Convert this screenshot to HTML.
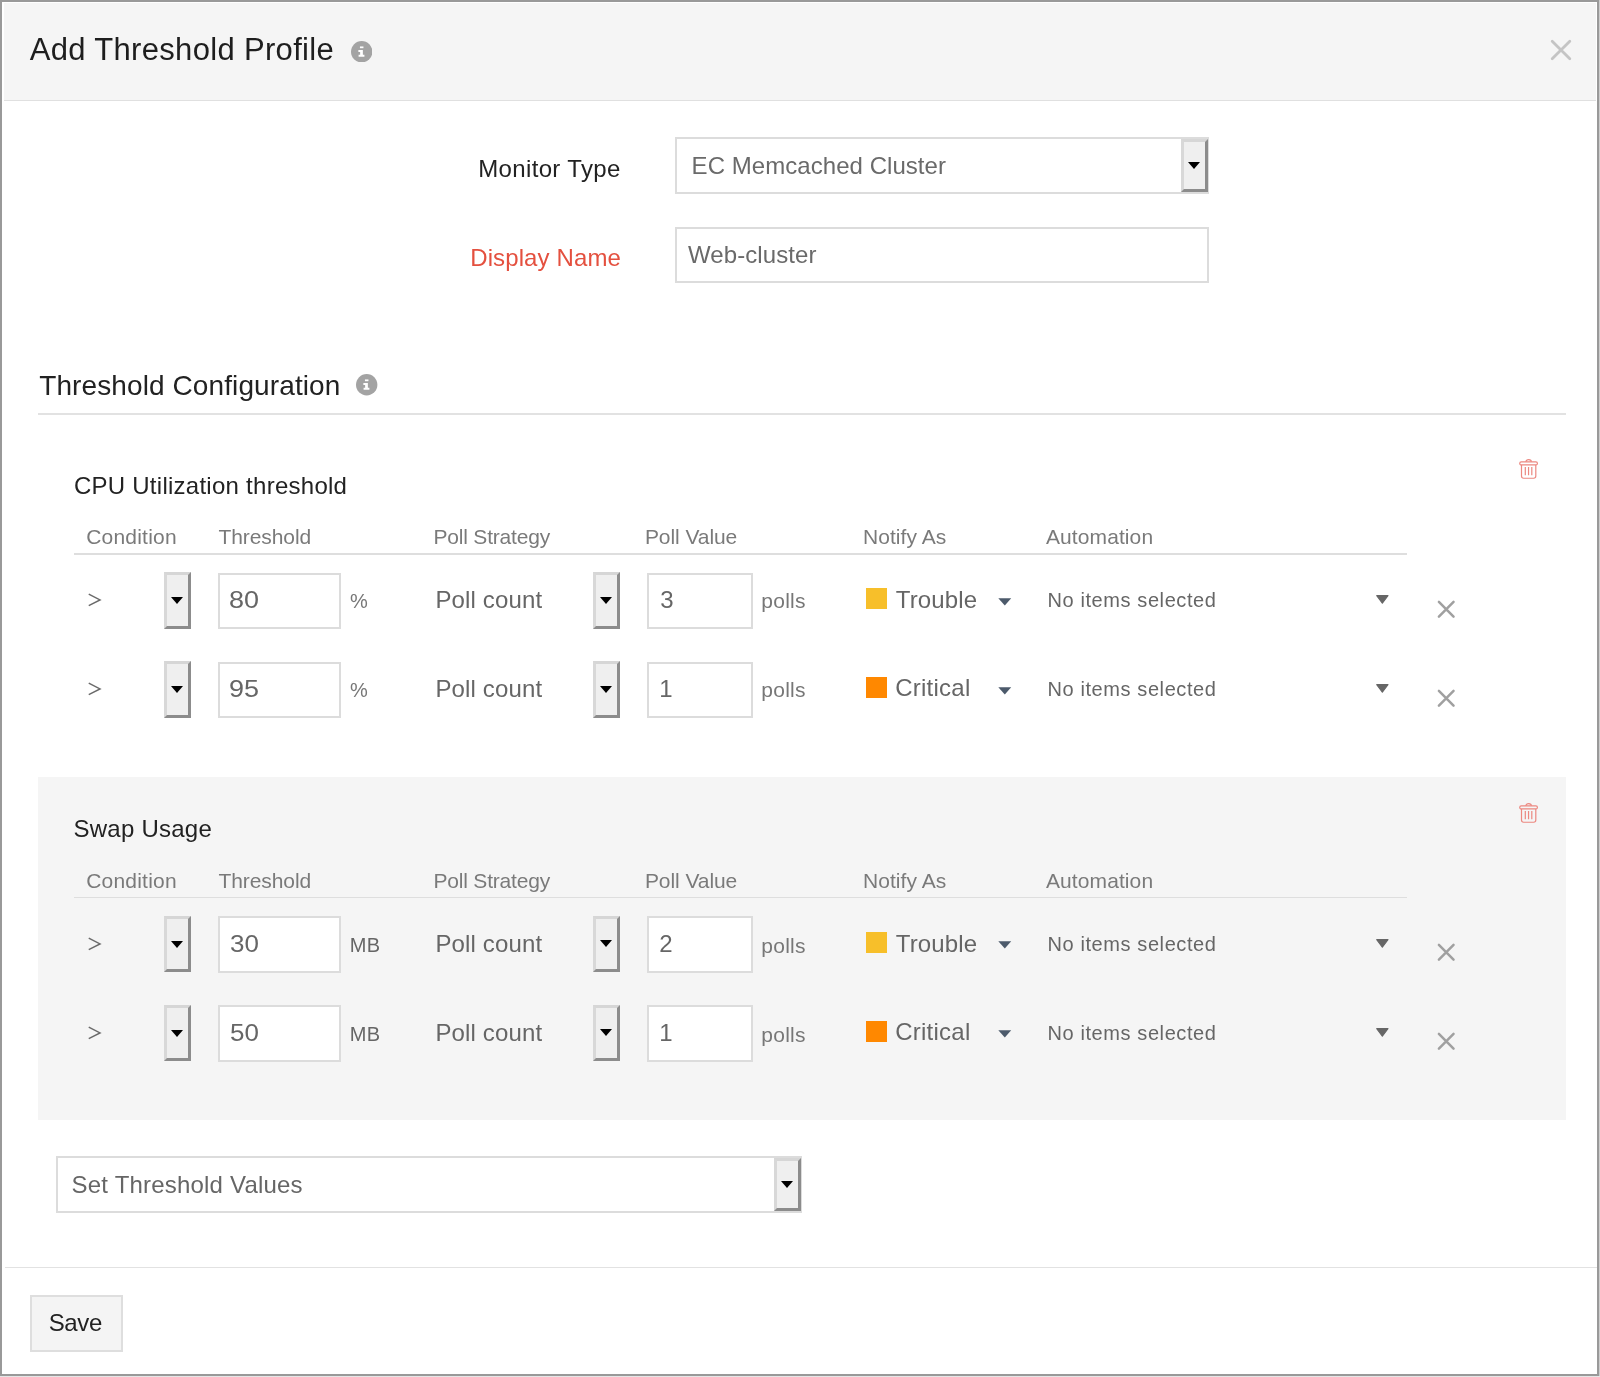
<!DOCTYPE html>
<html><head><meta charset="utf-8"><style>
html,body{margin:0;padding:0;width:1600px;height:1377px;overflow:hidden;background:#cdcdcd;font-family:"Liberation Sans", sans-serif;}
.abs{position:absolute;}
.t{position:absolute;white-space:nowrap;line-height:1;font-family:"Liberation Sans", sans-serif;}
#dlg{position:absolute;left:0;top:0;width:1599px;height:1376px;box-sizing:border-box;border:2px solid #999;background:#fff;}
#hdr{position:absolute;left:4px;top:3px;width:1592px;height:97px;background:#f5f5f5;border-bottom:1.5px solid #e0e0e0;}
.box{position:absolute;box-sizing:border-box;border:2px solid #dcdcdc;background:#fff;}
.btn3d{position:absolute;box-sizing:border-box;border-style:solid;border-width:3px 3.8px 3px 3px;border-color:#d6d6d6 #8c8c8c #8c8c8c #d8d8d8;background:#efefef;}
.btn3d .tri{position:absolute;left:50%;top:50%;margin-left:-6.5px;margin-top:-3.5px;width:0;height:0;border-left:6.5px solid transparent;border-right:6.5px solid transparent;border-top:7px solid #000;}
</style></head><body>
<div id="dlg"></div>
<div id="hdr"></div>
<svg class="abs" style="left:351.0px;top:40.8px" width="21.4" height="21.4" viewBox="0 0 22 22"><circle cx="11" cy="11" r="11" fill="#a3a3a3"/><rect x="9.2" y="5.6" width="3.6" height="1.8" fill="#fff"/><path d="M7.6 9.3h4.6v4.9h1.6v2.1H7.8v-2.1h1.6v-2.8H7.6z" fill="#fff"/></svg>
<svg class="abs" style="left:356.3px;top:374.3px" width="21.4" height="21.4" viewBox="0 0 22 22"><circle cx="11" cy="11" r="11" fill="#a3a3a3"/><rect x="9.2" y="5.6" width="3.6" height="1.8" fill="#fff"/><path d="M7.6 9.3h4.6v4.9h1.6v2.1H7.8v-2.1h1.6v-2.8H7.6z" fill="#fff"/></svg>
<svg class="abs" style="left:1549px;top:38px" width="24" height="24" viewBox="0 0 24 24"><path d="M3.2 3.2L20.8 20.8M20.8 3.2L3.2 20.8" stroke="#c4c4c4" stroke-width="2.8" stroke-linecap="round"/></svg>
<div class="box" style="left:675px;top:137px;width:534px;height:56.5px;"></div>
<div class="btn3d" style="left:1181px;top:139px;width:26.6px;height:52.5px"><i class="tri"></i></div>
<div class="box" style="left:675px;top:226.5px;width:534px;height:56.5px"></div>
<div class="abs" style="left:38px;top:413px;width:1528px;height:2px;background:#e2e2e2"></div>
<div class="abs" style="left:38px;top:777px;width:1528px;height:343px;background:#f5f5f5"></div>
<svg class="abs" style="left:1518px;top:458px" width="22" height="22" viewBox="0 0 22 22" fill="none" stroke="#ec8880" stroke-width="1.2"><path d="M7.85 3.8c0-1.3 1.2-2.2 2.75-2.2s2.75.9 2.75 2.2"/><rect x="1.75" y="3.8" width="17.65" height="3.1" rx="1.5"/><path d="M3.5 6.9v11.2c0 1.3.8 2.15 2.1 2.15h10.1c1.3 0 2.1-.85 2.1-2.15V6.9"/><path d="M7.3 9v8.2M10.55 9v8.2M13.8 9v8.2"/></svg>
<div class="abs" style="left:74px;top:553px;width:1333px;height:1.5px;background:#dedede"></div>
<svg class="abs" style="left:86px;top:591.5px" width="18" height="16" viewBox="0 0 18 16"><path d="M2.75 2.2L14 7.9L2.75 13.6" fill="none" stroke="#6a6a6a" stroke-width="1.5"/></svg>
<div class="btn3d" style="left:164px;top:572.3px;width:26.7px;height:56.5px"><i class="tri"></i></div>
<div class="box" style="left:217.5px;top:572.5px;width:123.4px;height:56.6px"></div>
<div class="btn3d" style="left:593.2px;top:572.2px;width:26.4px;height:56.5px"><i class="tri"></i></div>
<div class="box" style="left:647px;top:572.5px;width:105.5px;height:56.6px"></div>
<div class="abs" style="left:865.5px;top:588.0px;width:21.3px;height:21.4px;background:#f7bf2a"></div>
<svg class="abs" style="left:997.5px;top:597.5px" width="14" height="8" viewBox="0 0 14 8"><path d="M0.3 0.3H13.2L6.8 7.4z" fill="#4c5a6b"/></svg>
<svg class="abs" style="left:1375.5px;top:595.2px" width="13" height="9" viewBox="0 0 13 9"><path d="M0.7 0.6H12L6.35 8.2z" fill="#666" stroke="#666" stroke-width="1.1" stroke-linejoin="round"/></svg>
<svg class="abs" style="left:1435.5px;top:598.7px" width="21" height="20" viewBox="0 0 21 20"><path d="M2.9 2.8L17.55 17.6M17.55 2.8L2.9 17.6" stroke="#a0a0a0" stroke-width="2.5" stroke-linecap="round"/></svg>
<svg class="abs" style="left:86px;top:680.5px" width="18" height="16" viewBox="0 0 18 16"><path d="M2.75 2.2L14 7.9L2.75 13.6" fill="none" stroke="#6a6a6a" stroke-width="1.5"/></svg>
<div class="btn3d" style="left:164px;top:661.3px;width:26.7px;height:56.5px"><i class="tri"></i></div>
<div class="box" style="left:217.5px;top:661.5px;width:123.4px;height:56.6px"></div>
<div class="btn3d" style="left:593.2px;top:661.2px;width:26.4px;height:56.5px"><i class="tri"></i></div>
<div class="box" style="left:647px;top:661.5px;width:105.5px;height:56.6px"></div>
<div class="abs" style="left:865.5px;top:677.0px;width:21.3px;height:21.4px;background:#ff8800"></div>
<svg class="abs" style="left:997.5px;top:686.5px" width="14" height="8" viewBox="0 0 14 8"><path d="M0.3 0.3H13.2L6.8 7.4z" fill="#4c5a6b"/></svg>
<svg class="abs" style="left:1375.5px;top:684.2px" width="13" height="9" viewBox="0 0 13 9"><path d="M0.7 0.6H12L6.35 8.2z" fill="#666" stroke="#666" stroke-width="1.1" stroke-linejoin="round"/></svg>
<svg class="abs" style="left:1435.5px;top:687.7px" width="21" height="20" viewBox="0 0 21 20"><path d="M2.9 2.8L17.55 17.6M17.55 2.8L2.9 17.6" stroke="#a0a0a0" stroke-width="2.5" stroke-linecap="round"/></svg>
<svg class="abs" style="left:1518px;top:801.5px" width="22" height="22" viewBox="0 0 22 22" fill="none" stroke="#ec8880" stroke-width="1.2"><path d="M7.85 3.8c0-1.3 1.2-2.2 2.75-2.2s2.75.9 2.75 2.2"/><rect x="1.75" y="3.8" width="17.65" height="3.1" rx="1.5"/><path d="M3.5 6.9v11.2c0 1.3.8 2.15 2.1 2.15h10.1c1.3 0 2.1-.85 2.1-2.15V6.9"/><path d="M7.3 9v8.2M10.55 9v8.2M13.8 9v8.2"/></svg>
<div class="abs" style="left:74px;top:896.5px;width:1333px;height:1.5px;background:#dedede"></div>
<svg class="abs" style="left:86px;top:936.0px" width="18" height="16" viewBox="0 0 18 16"><path d="M2.75 2.2L14 7.9L2.75 13.6" fill="none" stroke="#6a6a6a" stroke-width="1.5"/></svg>
<div class="btn3d" style="left:164px;top:915.8px;width:26.7px;height:56.5px"><i class="tri"></i></div>
<div class="box" style="left:217.5px;top:916.0px;width:123.4px;height:56.6px"></div>
<div class="btn3d" style="left:593.2px;top:915.7px;width:26.4px;height:56.5px"><i class="tri"></i></div>
<div class="box" style="left:647px;top:916.0px;width:105.5px;height:56.6px"></div>
<div class="abs" style="left:865.5px;top:931.5px;width:21.3px;height:21.4px;background:#f7bf2a"></div>
<svg class="abs" style="left:997.5px;top:941.0px" width="14" height="8" viewBox="0 0 14 8"><path d="M0.3 0.3H13.2L6.8 7.4z" fill="#4c5a6b"/></svg>
<svg class="abs" style="left:1375.5px;top:938.7px" width="13" height="9" viewBox="0 0 13 9"><path d="M0.7 0.6H12L6.35 8.2z" fill="#666" stroke="#666" stroke-width="1.1" stroke-linejoin="round"/></svg>
<svg class="abs" style="left:1435.5px;top:942.2px" width="21" height="20" viewBox="0 0 21 20"><path d="M2.9 2.8L17.55 17.6M17.55 2.8L2.9 17.6" stroke="#a0a0a0" stroke-width="2.5" stroke-linecap="round"/></svg>
<svg class="abs" style="left:86px;top:1025.0px" width="18" height="16" viewBox="0 0 18 16"><path d="M2.75 2.2L14 7.9L2.75 13.6" fill="none" stroke="#6a6a6a" stroke-width="1.5"/></svg>
<div class="btn3d" style="left:164px;top:1004.8px;width:26.7px;height:56.5px"><i class="tri"></i></div>
<div class="box" style="left:217.5px;top:1005.0px;width:123.4px;height:56.6px"></div>
<div class="btn3d" style="left:593.2px;top:1004.7px;width:26.4px;height:56.5px"><i class="tri"></i></div>
<div class="box" style="left:647px;top:1005.0px;width:105.5px;height:56.6px"></div>
<div class="abs" style="left:865.5px;top:1020.5px;width:21.3px;height:21.4px;background:#ff8800"></div>
<svg class="abs" style="left:997.5px;top:1030.0px" width="14" height="8" viewBox="0 0 14 8"><path d="M0.3 0.3H13.2L6.8 7.4z" fill="#4c5a6b"/></svg>
<svg class="abs" style="left:1375.5px;top:1027.7px" width="13" height="9" viewBox="0 0 13 9"><path d="M0.7 0.6H12L6.35 8.2z" fill="#666" stroke="#666" stroke-width="1.1" stroke-linejoin="round"/></svg>
<svg class="abs" style="left:1435.5px;top:1031.2px" width="21" height="20" viewBox="0 0 21 20"><path d="M2.9 2.8L17.55 17.6M17.55 2.8L2.9 17.6" stroke="#a0a0a0" stroke-width="2.5" stroke-linecap="round"/></svg>
<div class="box" style="left:56px;top:1156px;width:746px;height:56.5px;"></div>
<div class="btn3d" style="left:774px;top:1158px;width:26.6px;height:52.5px"><i class="tri"></i></div>
<div class="abs" style="left:5px;top:1266.5px;width:1592px;height:1.5px;background:#e2e2e2"></div>
<div class="abs" style="left:0;top:1376px;width:1600px;height:1px;background:#e6e6e6"></div>
<div class="abs" style="left:30px;top:1295px;width:92.5px;height:56.5px;box-sizing:border-box;border:2px solid #dedede;background:#f4f4f4"></div>
<div id="txt" style="position:absolute;left:0;top:0;width:1600px;height:1377px;will-change:transform">
<div class="t" style="left:29.70px;top:34.36px;font-size:31px;color:#1e1e1e;letter-spacing:0.327px">Add Threshold Profile</div>
<div class="t" style="left:478.20px;top:156.68px;font-size:24px;color:#222;letter-spacing:0.356px">Monitor Type</div>
<div class="t" style="left:470.20px;top:246.28px;font-size:24px;color:#e4503f;letter-spacing:0.115px">Display Name</div>
<div class="t" style="left:691.60px;top:153.88px;font-size:24px;color:#6a6a6a;letter-spacing:0.051px">EC Memcached Cluster</div>
<div class="t" style="left:688.00px;top:243.08px;font-size:24px;color:#6a6a6a;letter-spacing:0.080px">Web-cluster</div>
<div class="t" style="left:39.20px;top:372.10px;font-size:28px;color:#222;letter-spacing:0.106px">Threshold Configuration</div>
<div class="t" style="left:73.90px;top:473.88px;font-size:24px;color:#222;letter-spacing:0.261px">CPU Utilization threshold</div>
<div class="t" style="left:86.20px;top:526.22px;font-size:21px;color:#7a7a7a;letter-spacing:0.207px">Condition</div>
<div class="t" style="left:218.40px;top:526.22px;font-size:21px;color:#7a7a7a;letter-spacing:-0.063px">Threshold</div>
<div class="t" style="left:433.50px;top:526.22px;font-size:21px;color:#7a7a7a;letter-spacing:-0.197px">Poll Strategy</div>
<div class="t" style="left:644.90px;top:526.22px;font-size:21px;color:#7a7a7a;letter-spacing:-0.069px">Poll Value</div>
<div class="t" style="left:863.00px;top:526.22px;font-size:21px;color:#7a7a7a;letter-spacing:0.060px">Notify As</div>
<div class="t" style="left:1046.00px;top:526.22px;font-size:21px;color:#7a7a7a;letter-spacing:0.094px">Automation</div>
<div class="t" style="left:228.98px;top:587.68px;font-size:24px;color:#666;letter-spacing:0.000px;transform:scaleX(1.1244);transform-origin:0 0">80</div>
<div class="t" style="left:350.00px;top:591.07px;font-size:20px;color:#777;letter-spacing:0.000px">%</div>
<div class="t" style="left:435.40px;top:587.68px;font-size:24px;color:#666;letter-spacing:0.152px">Poll count</div>
<div class="t" style="left:660.20px;top:587.68px;font-size:24px;color:#666;letter-spacing:0.000px">3</div>
<div class="t" style="left:761.30px;top:590.22px;font-size:21px;color:#777;letter-spacing:0.253px">polls</div>
<div class="t" style="left:895.80px;top:587.68px;font-size:24px;color:#666;letter-spacing:0.144px">Trouble</div>
<div class="t" style="left:1047.50px;top:589.67px;font-size:20px;color:#666;letter-spacing:0.592px">No items selected</div>
<div class="t" style="left:228.98px;top:676.68px;font-size:24px;color:#666;letter-spacing:0.000px;transform:scaleX(1.1244);transform-origin:0 0">95</div>
<div class="t" style="left:350.00px;top:680.07px;font-size:20px;color:#777;letter-spacing:0.000px">%</div>
<div class="t" style="left:435.40px;top:676.68px;font-size:24px;color:#666;letter-spacing:0.152px">Poll count</div>
<div class="t" style="left:659.20px;top:676.68px;font-size:24px;color:#666;letter-spacing:0.000px">1</div>
<div class="t" style="left:761.30px;top:679.22px;font-size:21px;color:#777;letter-spacing:0.253px">polls</div>
<div class="t" style="left:895.20px;top:676.08px;font-size:24px;color:#666;letter-spacing:0.242px">Critical</div>
<div class="t" style="left:1047.50px;top:678.67px;font-size:20px;color:#666;letter-spacing:0.592px">No items selected</div>
<div class="t" style="left:73.45px;top:817.38px;font-size:24px;color:#222;letter-spacing:0.250px">Swap Usage</div>
<div class="t" style="left:86.20px;top:869.72px;font-size:21px;color:#7a7a7a;letter-spacing:0.207px">Condition</div>
<div class="t" style="left:218.40px;top:869.72px;font-size:21px;color:#7a7a7a;letter-spacing:-0.063px">Threshold</div>
<div class="t" style="left:433.50px;top:869.72px;font-size:21px;color:#7a7a7a;letter-spacing:-0.197px">Poll Strategy</div>
<div class="t" style="left:644.90px;top:869.72px;font-size:21px;color:#7a7a7a;letter-spacing:-0.069px">Poll Value</div>
<div class="t" style="left:863.00px;top:869.72px;font-size:21px;color:#7a7a7a;letter-spacing:0.060px">Notify As</div>
<div class="t" style="left:1046.00px;top:869.72px;font-size:21px;color:#7a7a7a;letter-spacing:0.094px">Automation</div>
<div class="t" style="left:230.10px;top:932.08px;font-size:24px;color:#666;letter-spacing:0.000px;transform:scaleX(1.0817);transform-origin:0 0">30</div>
<div class="t" style="left:349.70px;top:935.47px;font-size:20px;color:#666;letter-spacing:0.440px">MB</div>
<div class="t" style="left:435.40px;top:932.08px;font-size:24px;color:#666;letter-spacing:0.152px">Poll count</div>
<div class="t" style="left:659.20px;top:932.08px;font-size:24px;color:#666;letter-spacing:0.000px">2</div>
<div class="t" style="left:761.30px;top:934.62px;font-size:21px;color:#777;letter-spacing:0.253px">polls</div>
<div class="t" style="left:895.80px;top:932.08px;font-size:24px;color:#666;letter-spacing:0.144px">Trouble</div>
<div class="t" style="left:1047.50px;top:934.07px;font-size:20px;color:#666;letter-spacing:0.592px">No items selected</div>
<div class="t" style="left:230.10px;top:1021.08px;font-size:24px;color:#666;letter-spacing:0.000px;transform:scaleX(1.0817);transform-origin:0 0">50</div>
<div class="t" style="left:349.70px;top:1024.47px;font-size:20px;color:#666;letter-spacing:0.440px">MB</div>
<div class="t" style="left:435.40px;top:1021.08px;font-size:24px;color:#666;letter-spacing:0.152px">Poll count</div>
<div class="t" style="left:659.20px;top:1021.08px;font-size:24px;color:#666;letter-spacing:0.000px">1</div>
<div class="t" style="left:761.30px;top:1023.62px;font-size:21px;color:#777;letter-spacing:0.253px">polls</div>
<div class="t" style="left:895.20px;top:1020.48px;font-size:24px;color:#666;letter-spacing:0.242px">Critical</div>
<div class="t" style="left:1047.50px;top:1023.07px;font-size:20px;color:#666;letter-spacing:0.592px">No items selected</div>
<div class="t" style="left:71.60px;top:1172.68px;font-size:24px;color:#666;letter-spacing:0.196px">Set Threshold Values</div>
<div class="t" style="left:48.70px;top:1311.48px;font-size:24px;color:#222;letter-spacing:-0.352px">Save</div>
</div>
</body></html>
